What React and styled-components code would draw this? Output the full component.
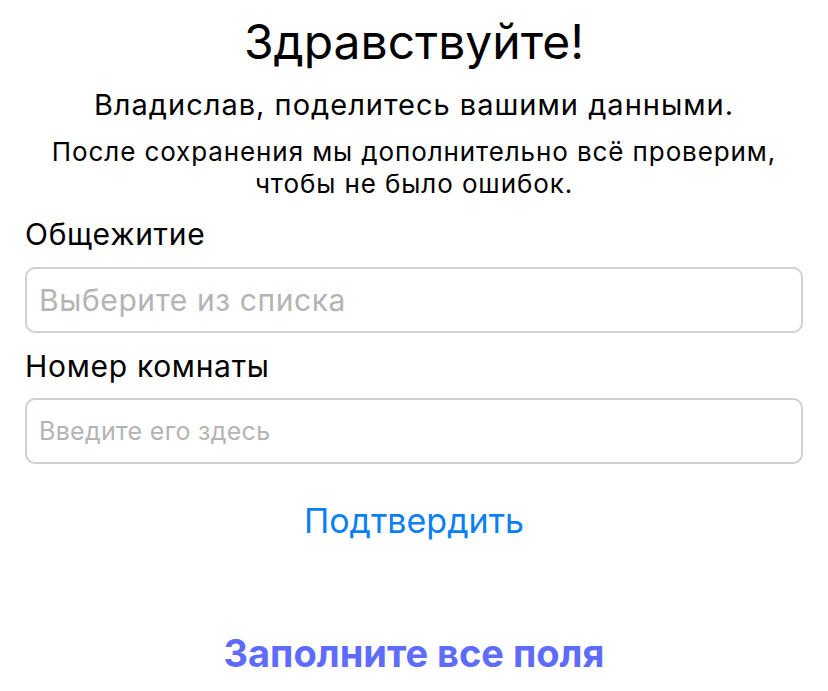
import React from "react"
import styled, { createGlobalStyle } from "styled-components"

const GlobalStyle = createGlobalStyle`
  body {
    margin: 0;
    background: #ffffff;
    font-family: Inter, Roboto, "Liberation Sans", sans-serif;
    color: #000000;
  }
`

const Page = styled.div`
  display: flex;
  flex-direction: column;
  padding: 10px 25px 0 25px;
`

const Title = styled.h1`
  margin: 0;
  text-align: center;
  font-size: 48px;
  font-weight: 400;
  line-height: 64px;
`

const Subtitle = styled.p`
  margin: 14px 0 0 0;
  text-align: center;
  font-size: 29px;
  letter-spacing: 1px;
  line-height: 34px;
`

const Note = styled.p`
  margin: 14px 0 0 0;
  text-align: center;
  font-size: 26px;
  letter-spacing: 0.9px;
  line-height: 32px;
`

const Label = styled.label`
  display: block;
  margin-top: ${(props) => props.top || 15}px;
  font-size: 30px;
  letter-spacing: 0.7px;
  line-height: 36px;
`

const Field = styled.input`
  box-sizing: border-box;
  width: 100%;
  height: 66px;
  margin-top: ${(props) => props.top || 15}px;
  padding: 0 12px;
  border: 2px solid #d0d0d0;
  border-radius: 10px;
  font-family: Inter, Roboto, "Liberation Sans", sans-serif;
  font-size: ${(props) => props.size}px;
  letter-spacing: ${(props) => props.spacing}px;
  outline: none;

  &::placeholder {
    color: #b4b4b4;
  }
`

const ConfirmButton = styled.button`
  align-self: center;
  margin-top: 35px;
  padding: 0;
  border: none;
  background: none;
  font-family: Inter, Roboto, "Liberation Sans", sans-serif;
  font-size: 34px;
  line-height: 44px;
  color: #0a7ff6;
  cursor: pointer;
`

const Warning = styled.div`
  margin-top: 86px;
  text-align: center;
  font-size: 38px;
  font-weight: 700;
  line-height: 48px;
  color: #5e6bfd;
`

function App() {
  return (
    <>
      <GlobalStyle />
      <Page>
        <Title>Здравствуйте!</Title>
        <Subtitle>Владислав, поделитесь вашими данными.</Subtitle>
        <Note>
          После сохранения мы дополнительно всё проверим,
          <br />
          чтобы не было ошибок.
        </Note>
        <Label top={16}>Общежитие</Label>
        <Field size={30} spacing={0.6} placeholder="Выберите из списка" />
        <Label>Номер комнаты</Label>
        <Field
          top={14}
          size={25}
          spacing={0.3}
          placeholder="Введите его здесь"
        />
        <ConfirmButton>Подтвердить</ConfirmButton>
        <Warning>Заполните все поля</Warning>
      </Page>
    </>
  )
}

export default App
